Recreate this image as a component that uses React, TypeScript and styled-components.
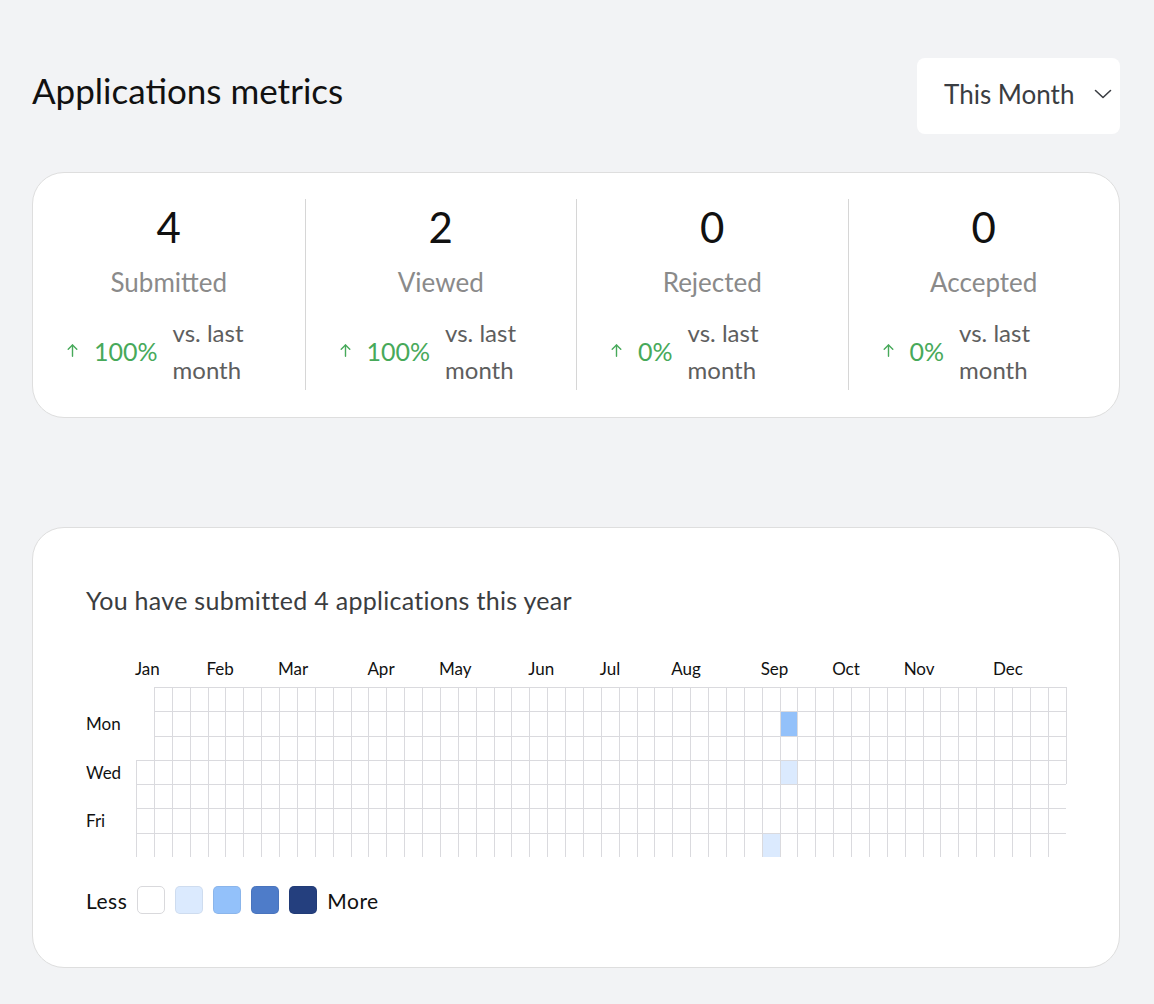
import React from 'react';
import styled, { createGlobalStyle } from 'styled-components';

const GlobalStyle = createGlobalStyle`
  body {
    margin: 0;
    background: #f2f3f5;
    font-family: Lato, "Noto Sans", sans-serif;
    color: #111;
  }
  * {
    box-sizing: border-box;
  }
`;

const Page = styled.div`
  padding: 58px 34px 40px 32px;
`;

const Header = styled.div`
  display: flex;
  justify-content: space-between;
  align-items: flex-start;
`;

const Title = styled.h1`
  margin: 11px 0 0;
  font-size: 35px;
  font-weight: 400;
  line-height: 1.2;
  color: #111;
`;

const PeriodSelect = styled.button`
  width: 203px;
  height: 76px;
  display: flex;
  align-items: center;
  justify-content: space-between;
  padding: 0 8px 4px 27px;
  border: none;
  border-radius: 8px;
  background: #fff;
  font-family: inherit;
  font-size: 26px;
  color: #3a3d42;
  cursor: pointer;
`;

const StatsCard = styled.div`
  margin-top: 38px;
  display: grid;
  grid-template-columns: repeat(4, 1fr);
  padding: 26px 0 27px;
  background: #fff;
  border: 1px solid #dedede;
  border-radius: 32px;
`;

const StatColumn = styled.div<{ $first: boolean }>`
  height: 191px;
  display: flex;
  flex-direction: column;
  align-items: center;
  padding: 0 34px;
  border-left: ${p => (p.$first ? 'none' : '1px solid #d6d6d6')};
`;

const StatValue = styled.div`
  margin-top: 3px;
  font-size: 42px;
  line-height: 1.2;
  color: #111;
`;

const StatLabel = styled.div`
  margin-top: 15px;
  font-size: 26px;
  line-height: 1.2;
  color: #8a8a8a;
`;

const Trend = styled.div`
  margin-top: 15px;
  display: flex;
  align-items: center;
  gap: 15px;
`;

const TrendValue = styled.div`
  display: flex;
  align-items: center;
  gap: 16px;
  flex-shrink: 0;
  font-size: 25px;
  color: #47a95a;
`;

const TrendNote = styled.div`
  font-size: 24px;
  line-height: 37px;
  color: #5e5e5e;
`;

const HeatmapCard = styled.div`
  margin-top: 109px;
  padding: 57px 53px 53px;
  background: #fff;
  border: 1px solid #dedede;
  border-radius: 32px;
`;

const HeatmapTitle = styled.div`
  font-size: 25px;
  letter-spacing: 0.3px;
  line-height: 1.2;
  color: #3b3d40;
`;

const CELL_W = 17.88;
const CELL_H = 24.3;
const LABEL_W = 50;

const HeatmapClip = styled.div`
  margin-top: 44px;
  width: calc(100% + 1px);
  overflow: hidden;
`;

const MonthRow = styled.div`
  display: grid;
  grid-template-columns: ${LABEL_W}px repeat(53, ${CELL_W}px);
  height: 20px;
  margin-bottom: 8px;
`;

const MonthLabel = styled.div`
  margin-left: -1px;
  font-size: 17px;
  line-height: 20px;
  color: #111;
  white-space: nowrap;
`;

const HeatmapBody = styled.div`
  display: flex;
`;

const DayLabels = styled.div`
  width: ${LABEL_W}px;
  flex-shrink: 0;
  display: grid;
  grid-template-rows: repeat(7, ${CELL_H}px);
`;

const DayLabel = styled.div`
  display: flex;
  align-items: center;
  font-size: 17px;
  color: #111;
`;

const Cells = styled.div`
  display: grid;
  grid-auto-flow: column;
  grid-template-rows: repeat(7, ${CELL_H}px);
  grid-auto-columns: ${CELL_W}px;
`;

const LEVEL_COLORS = ['#ffffff', '#dbeafe', '#93c1fa', '#4e7cc9', '#243f7e'];

const Cell = styled.div<{ $empty: boolean; $level: number }>`
  border-top: ${p => (p.$empty ? 'none' : '1px solid #dadade')};
  border-left: ${p => (p.$empty ? 'none' : '1px solid #dadade')};
  background: ${p => (p.$empty ? 'transparent' : LEVEL_COLORS[p.$level])};
`;

const Legend = styled.div`
  margin-top: 29px;
  display: flex;
  align-items: center;
  gap: 10px;
  font-size: 21px;
  letter-spacing: 0.5px;
  color: #111;
`;

const LegendSwatch = styled.div<{ $level: number }>`
  width: 28px;
  height: 28px;
  border-radius: 5px;
  border: 1px solid ${p => (p.$level === 0 ? '#d9d9dc' : 'rgba(0, 0, 0, 0.06)')};
  background: ${p => LEVEL_COLORS[p.$level]};
`;

const stats = [
  { value: 4, label: 'Submitted', change: '100%' },
  { value: 2, label: 'Viewed', change: '100%' },
  { value: 0, label: 'Rejected', change: '0%' },
  { value: 0, label: 'Accepted', change: '0%' },
];

const YEAR = 2025;
const DAY = 86400000;
const yearStart = Date.UTC(YEAR, 0, 1);
const startOffset = new Date(yearStart).getUTCDay();
const daysInYear = (Date.UTC(YEAR + 1, 0, 1) - yearStart) / DAY;
const dayOfYear = (m: number, d: number) => (Date.UTC(YEAR, m, d) - yearStart) / DAY;

const submissions: Record<number, number> = {
  [dayOfYear(8, 6)]: 1,
  [dayOfYear(8, 8)]: 2,
  [dayOfYear(8, 10)]: 1,
};

const totalWeeks = Math.ceil((daysInYear + startOffset) / 7);
const months = ['Jan', 'Feb', 'Mar', 'Apr', 'May', 'Jun', 'Jul', 'Aug', 'Sep', 'Oct', 'Nov', 'Dec'];
const dayNames = ['', 'Mon', '', 'Wed', '', 'Fri', ''];

const levelFor = (count: number) => (count <= 0 ? 0 : Math.min(4, count));

const UpArrow = () => (
  <svg width="11" height="13" viewBox="0 0 11 13" fill="none" stroke="currentColor" strokeWidth="1.4" strokeLinecap="round" strokeLinejoin="round">
    <path d="M5.5 12.2V1" />
    <path d="M1.2 5.3l4.3-4.3 4.3 4.3" />
  </svg>
);

const Chevron = () => (
  <svg width="18" height="10" viewBox="0 0 18 10" fill="none" stroke="#3a3d42" strokeWidth="1.6" strokeLinecap="round" strokeLinejoin="round">
    <path d="M1.5 1.5L9 8.5l7.5-7" />
  </svg>
);

const Heatmap: React.FC = () => {
  const cells = [];
  for (let w = 0; w < totalWeeks; w++) {
    for (let d = 0; d < 7; d++) {
      const idx = w * 7 + d - startOffset;
      const empty = idx < 0 || idx >= daysInYear;
      cells.push(
        <Cell key={`${w}-${d}`} $empty={empty} $level={empty ? 0 : levelFor(submissions[idx] || 0)} />
      );
    }
  }

  return (
    <HeatmapClip>
      <MonthRow>
        {months.map((m, i) => {
          const week = Math.floor((dayOfYear(i, 1) + startOffset) / 7);
          return (
            <MonthLabel key={m} style={{ gridColumn: `${week + 2} / span 3`, gridRow: 1 }}>
              {m}
            </MonthLabel>
          );
        })}
      </MonthRow>
      <HeatmapBody>
        <DayLabels>
          {dayNames.map((n, i) => (
            <DayLabel key={i}>{n}</DayLabel>
          ))}
        </DayLabels>
        <Cells>{cells}</Cells>
      </HeatmapBody>
    </HeatmapClip>
  );
};

const App: React.FC = () => {
  const total = Object.values(submissions).reduce((a, b) => a + b, 0);

  return (
    <Page>
      <GlobalStyle />
      <Header>
        <Title>Applications metrics</Title>
        <PeriodSelect>
          This Month
          <Chevron />
        </PeriodSelect>
      </Header>

      <StatsCard>
        {stats.map((s, i) => (
          <StatColumn key={s.label} $first={i === 0}>
            <StatValue>{s.value}</StatValue>
            <StatLabel>{s.label}</StatLabel>
            <Trend>
              <TrendValue>
                <UpArrow />
                {s.change}
              </TrendValue>
              <TrendNote>vs. last month</TrendNote>
            </Trend>
          </StatColumn>
        ))}
      </StatsCard>

      <HeatmapCard>
        <HeatmapTitle>You have submitted {total} applications this year</HeatmapTitle>
        <Heatmap />
        <Legend>
          Less
          {LEVEL_COLORS.map((_, i) => (
            <LegendSwatch key={i} $level={i} />
          ))}
          More
        </Legend>
      </HeatmapCard>
    </Page>
  );
};

export default App;
